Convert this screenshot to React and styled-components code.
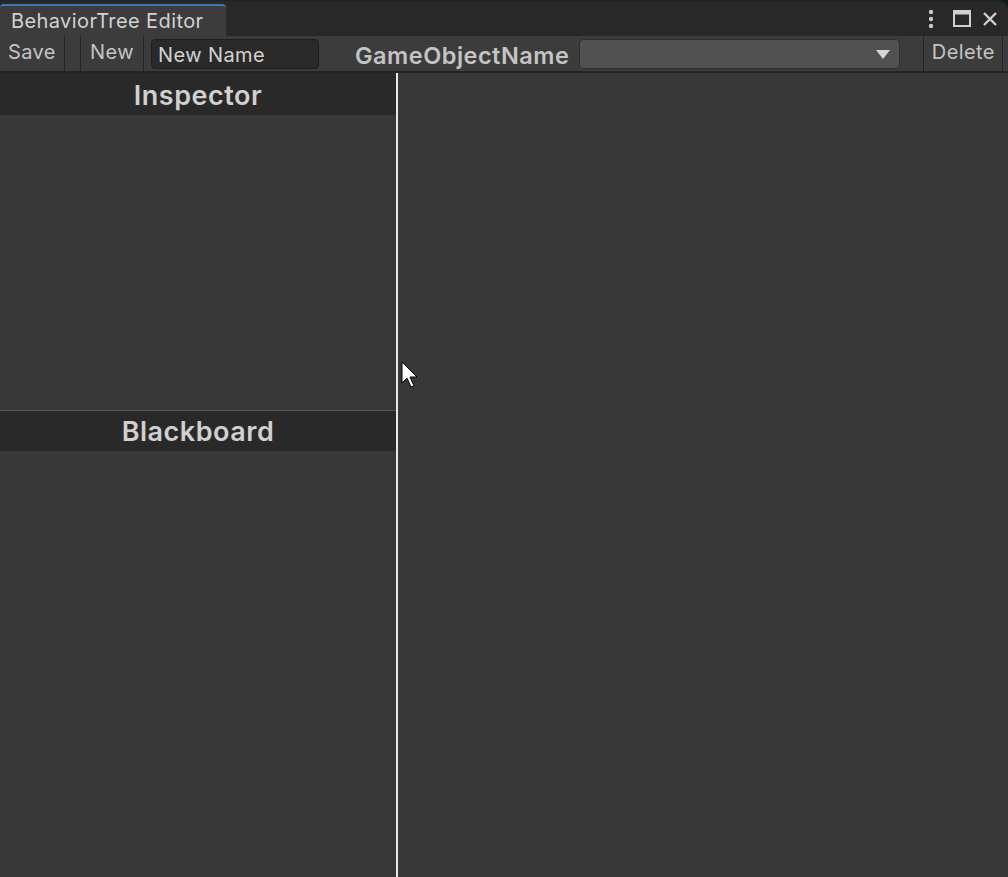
import React from "react";
import styled, { createGlobalStyle } from "styled-components";

const Global = createGlobalStyle`
  html, body { margin: 0; padding: 0; background: #0f1a1f; }
  body { font-family: Inter, "Noto Sans", sans-serif; overflow: hidden; }
  * { box-sizing: border-box; }
`;

const Window = styled.div`
  width: 1008px;
  height: 877px;
  background: #282828;
  border-top-right-radius: 10px;
  border-top: 1px solid #1a2328;
  display: flex;
  flex-direction: column;
  position: relative;
  overflow: hidden;
`;

const TitleBar = styled.div`
  height: 35px;
  display: flex;
  align-items: flex-end;
  padding-top: 3px;
`;

const Tab = styled.div`
  width: 226px;
  height: 32px;
  background: #3c3c3c;
  border-top: 2px solid #3d78b3;
  border-top-left-radius: 4px;
  border-top-right-radius: 4px;
  color: #d2d2d2;
  font-size: 20px;
  letter-spacing: 0.4px;
  padding-left: 11px;
  display: flex;
  align-items: center;
  padding-bottom: 1px;
`;

const TitleIcons = styled.div`
  margin-left: auto;
  display: flex;
  align-items: center;
  height: 100%;
  padding-right: 9px;
  padding-bottom: 2px;
`;

const IconSlot = styled.div`
  display: flex;
  margin-left: ${(p) => p.$ml || 0}px;
`;

const Toolbar = styled.div`
  height: 37px;
  background: #3c3c3c;
  border-bottom: 2px solid #232323;
  display: flex;
  align-items: stretch;
`;

const ToolButton = styled.div`
  width: ${(p) => p.$w}px;
  color: #c4c4c4;
  font-size: 20px;
  letter-spacing: 0.4px;
  display: flex;
  align-items: center;
  justify-content: center;
  padding-bottom: 4px;
  border-right: 1px solid #242424;
`;

const Spacer = styled.div`
  width: ${(p) => p.$w}px;
  border-right: 1px solid #242424;
`;

const NameField = styled.div`
  margin: 3px 0 2px 7px;
  width: 168px;
  background: #2a2a2a;
  border: 1px solid #1e1e1e;
  border-radius: 4px;
  color: #d2d2d2;
  font-size: 20px;
  letter-spacing: 0.4px;
  padding-left: 6px;
  display: flex;
  align-items: center;
  padding-top: 2px;
`;

const FieldLabel = styled.div`
  margin-left: 36px;
  color: #c4c4c4;
  font-size: 23.5px;
  letter-spacing: 0.5px;
  font-weight: 600;
  display: flex;
  align-items: center;
  padding-top: 3px;
  white-space: nowrap;
`;

const Dropdown = styled.div`
  margin: 3px 0 2px 10px;
  width: 321px;
  background: #515151;
  border: 1px solid #2e2e2e;
  border-radius: 4px;
  display: flex;
  align-items: center;
  justify-content: flex-end;
  padding-right: 9px;
`;

const Body = styled.div`
  flex: 1;
  display: flex;
  background: #383838;
`;

const LeftPanel = styled.div`
  width: 396px;
  display: flex;
  flex-direction: column;
`;

const Section = styled.div`
  height: ${(p) => (p.$h ? p.$h + "px" : "auto")};
  flex: ${(p) => (p.$h ? "none" : 1)};
  border-top: ${(p) => (p.$line ? "1px solid #555555" : "none")};
`;

const Header = styled.div`
  height: ${(p) => p.$h}px;
  background: #292929;
  color: #d0d0d0;
  font-size: 27px;
  letter-spacing: 0.5px;
  font-weight: 600;
  display: flex;
  align-items: center;
  justify-content: center;
  padding-top: ${(p) => p.$pt || 0}px;
`;

const Divider = styled.div`
  width: 2px;
  background: #e8e8e8;
`;

const Canvas = styled.div`
  flex: 1;
  background: #383838;
`;

const Cursor = styled.svg`
  position: absolute;
  left: 401px;
  top: 360px;
`;

export default function App() {
  return (
    <>
      <Global />
      <Window>
        <TitleBar>
          <Tab>BehaviorTree Editor</Tab>
          <TitleIcons>
            <IconSlot>
              <svg width="8" height="20" viewBox="0 0 8 20">
                <circle cx="4" cy="3" r="2.2" fill="#c8c8c8" />
                <circle cx="4" cy="10" r="2.2" fill="#c8c8c8" />
                <circle cx="4" cy="17" r="2.2" fill="#c8c8c8" />
              </svg>
            </IconSlot>
            <IconSlot $ml={17}>
              <svg width="20" height="18" viewBox="0 0 20 18">
                <rect x="2" y="1" width="16" height="15" fill="none" stroke="#d0d0d0" strokeWidth="2" />
                <rect x="2" y="1" width="16" height="3.5" fill="#d0d0d0" />
              </svg>
            </IconSlot>
            <IconSlot $ml={9}>
              <svg width="18" height="18" viewBox="0 0 18 18">
                <path d="M3 3 L15 15 M15 3 L3 15" stroke="#d0d0d0" strokeWidth="2.4" />
              </svg>
            </IconSlot>
          </TitleIcons>
        </TitleBar>
        <Toolbar>
          <ToolButton $w={65}>Save</ToolButton>
          <Spacer $w={16} />
          <ToolButton $w={63}>New</ToolButton>
          <NameField>New Name</NameField>
          <FieldLabel>GameObjectName</FieldLabel>
          <Dropdown>
            <svg width="14" height="9" viewBox="0 0 14 9">
              <path d="M0 0 L14 0 L7 9 Z" fill="#d6d6d6" />
            </svg>
          </Dropdown>
          <Spacer $w={24} />
          <ToolButton $w={79}>Delete</ToolButton>
        </Toolbar>
        <Body>
          <LeftPanel>
            <Section $h={337}>
              <Header $h={42} $pt={2}>Inspector</Header>
            </Section>
            <Section $line>
              <Header $h={40} $pt={0}>Blackboard</Header>
            </Section>
          </LeftPanel>
          <Divider />
          <Canvas />
        </Body>
        <Cursor width="20" height="30" viewBox="0 0 20 30">
          <path d="M1 1 L1 22 L6 17 L10 26 L13 25 L9 16 L16 16 Z" fill="#ffffff" stroke="#000" strokeWidth="1" />
        </Cursor>
      </Window>
    </>
  );
}
